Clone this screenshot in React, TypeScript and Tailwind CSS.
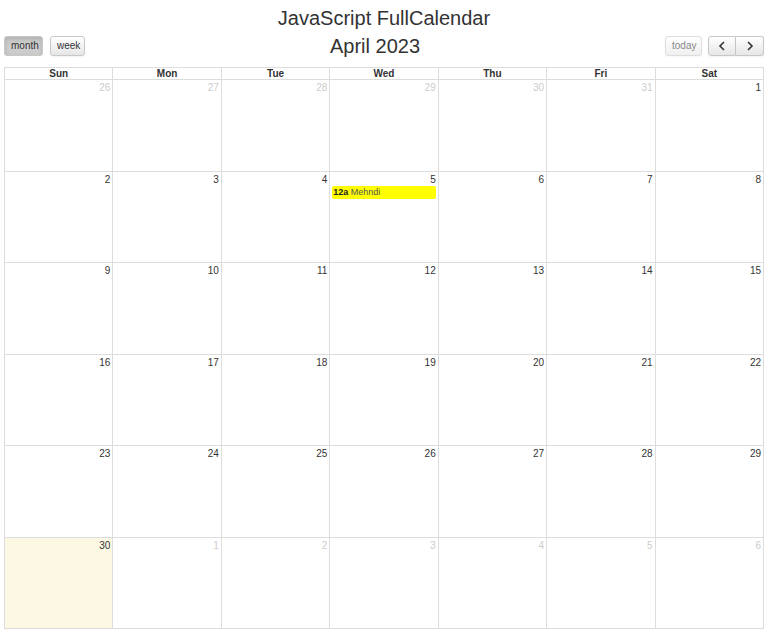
const days = ['Sun', 'Mon', 'Tue', 'Wed', 'Thu', 'Fri', 'Sat'];

type Cell = { day: number; other: boolean; today?: boolean };

function buildWeeks(): Cell[][] {
  const cells: Cell[] = [];
  [26, 27, 28, 29, 30, 31].forEach((d) => cells.push({ day: d, other: true }));
  for (let d = 1; d <= 30; d++) cells.push({ day: d, other: false, today: d === 30 });
  for (let d = 1; cells.length < 42; d++) cells.push({ day: d, other: true });
  const weeks: Cell[][] = [];
  for (let i = 0; i < 42; i += 7) weeks.push(cells.slice(i, i + 7));
  return weeks;
}

function Button({
  children,
  active,
  disabled,
  className = '',
}: {
  children: React.ReactNode;
  active?: boolean;
  disabled?: boolean;
  className?: string;
}) {
  return (
    <button
      className={
        'h-[20px] px-[6px] text-[10px] leading-none border border-[#c8c8c8] rounded-[3px] ' +
        (active
          ? 'bg-[#cccccc] shadow-[inset_0_2px_4px_rgba(0,0,0,0.15)] text-[#333] '
          : 'bg-gradient-to-b from-white to-[#e6e6e6] shadow-[0_1px_2px_rgba(0,0,0,0.05)] text-[#333] ') +
        (disabled ? 'opacity-60 ' : '') +
        className
      }
    >
      {children}
    </button>
  );
}

export default function App() {
  const weeks = buildWeeks();

  return (
    <div className="w-[768px] h-[633px] bg-white px-[4px] font-['Liberation_Sans',Arial,sans-serif] text-[#333]">
      <h1 className="text-center text-[20px] leading-[24px] pt-[6px] text-[#333]">
        JavaScript FullCalendar
      </h1>

      <div className="flex items-center justify-between h-[30px] mt-[1px] mb-[6px]">
        <div className="flex gap-[7px]">
          <Button active className="w-[39px]">month</Button>
          <Button className="w-[35px]">week</Button>
        </div>
        <h2 className="text-[20px] leading-[24px] text-[#333]">April 2023</h2>
        <div className="flex gap-[6px] justify-end">
          <Button disabled className="w-[37px]">today</Button>
          <div className="flex">
            <Button className="w-[28px] rounded-r-none flex items-center justify-center">
              <svg width="8" height="10" viewBox="0 0 8 10" fill="none" stroke="#333" strokeWidth="1.6">
                <path d="M6 1 L2 5 L6 9" />
              </svg>
            </Button>
            <Button className="w-[28px] rounded-l-none border-l-0 flex items-center justify-center">
              <svg width="8" height="10" viewBox="0 0 8 10" fill="none" stroke="#333" strokeWidth="1.6">
                <path d="M2 1 L6 5 L2 9" />
              </svg>
            </Button>
          </div>
        </div>
      </div>

      <div className="border-l border-t border-[#dddddd]">
        <div className="grid grid-cols-7">
          {days.map((d) => (
            <div
              key={d}
              className="h-[12px] border-r border-b border-[#dddddd] text-center text-[10px] leading-[11px] font-bold"
            >
              {d}
            </div>
          ))}
        </div>
        {weeks.map((week, wi) => (
          <div key={wi} className="grid grid-cols-7 h-[91.5px]">
            {week.map((c, ci) => (
              <div
                key={ci}
                className={
                  'border-r border-b border-[#dddddd] relative ' +
                  (c.today ? 'bg-[#fcf8e3]' : 'bg-white')
                }
              >
                <div
                  className={
                    'text-right text-[10px] leading-[12px] pr-[2px] pt-[2px] ' +
                    (c.other ? 'text-[#cccccc]' : 'text-[#333]')
                  }
                >
                  {c.day}
                </div>
                {!c.other && c.day === 5 && (
                  <div className="mx-[2px] h-[13px] bg-[#ffff00] rounded-[2px] px-[1px] text-[9px] leading-[13px] text-[#555]">
                    <span className="font-bold text-[#222]">12a</span> Mehndi
                  </div>
                )}
              </div>
            ))}
          </div>
        ))}
      </div>
    </div>
  );
}
